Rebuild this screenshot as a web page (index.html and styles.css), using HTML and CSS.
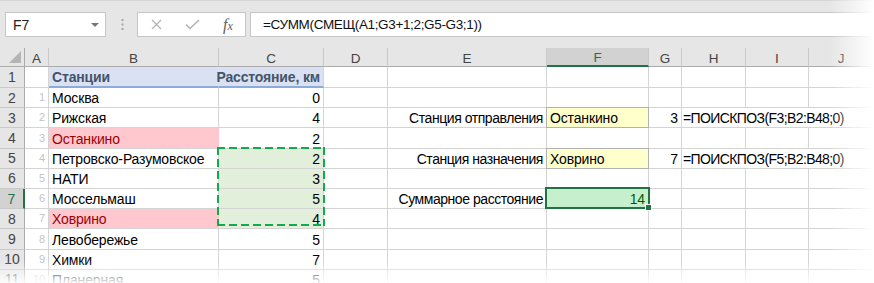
FILE: index.html
```html
<!DOCTYPE html>
<html lang="ru">
<head>
    <meta charset="UTF-8">
    <meta name="viewport" content="width=device-width, initial-scale=1.0">
    <title>СУММ и СМЕЩ</title>
    <link rel="stylesheet" href="styles.css">
</head>
<body>
    <div class="window">
        <div class="toolbar">
            <div class="namebox">
                <span>F7</span>
                <svg class="arrow" width="8" height="4" viewBox="0 0 8 4"><path d="M0 0H8L4 4Z" fill="#777"/></svg>
            </div>
            <svg class="dots" width="3" height="11" viewBox="0 0 3 11">
                <rect x="0.5" y="0" width="2" height="2" fill="#a6a6a6"/>
                <rect x="0.5" y="4.5" width="2" height="2" fill="#a6a6a6"/>
                <rect x="0.5" y="9" width="2" height="2" fill="#a6a6a6"/>
            </svg>
            <div class="fbuttons">
                <svg class="cancel" width="11" height="11" viewBox="0 0 11 11"><path d="M1 1L10 10M10 1L1 10" stroke="#b3b3b3" stroke-width="1.3" fill="none"/></svg>
                <svg class="enter" width="15" height="11" viewBox="0 0 15 11"><path d="M1 5.5L5 9.5L14 1" stroke="#b3b3b3" stroke-width="1.6" fill="none"/></svg>
                <span class="fx">f<small>x</small></span>
            </div>
            <div class="formula">=СУММ(СМЕЩ(A1;G3+1;2;G5-G3;1))</div>
        </div>

        <div class="sheet">
            <div class="corner"><svg width="12" height="12" viewBox="0 0 12 12"><path d="M12 0V12H0Z" fill="#b5b5b5"/></svg></div>
            <div class="ch">A</div>
            <div class="ch">B</div>
            <div class="ch">C</div>
            <div class="ch">D</div>
            <div class="ch">E</div>
            <div class="ch ch-sel">F</div>
            <div class="ch">G</div>
            <div class="ch">H</div>
            <div class="ch">I</div>
            <div class="ch">J</div>

            <!-- 1 -->
            <div class="rh">1</div>
            <div class="c"></div>
            <div class="c head">Станции</div>
            <div class="c head r">Расстояние, км</div>
            <div class="c"></div><div class="c"></div><div class="c"></div><div class="c"></div><div class="c"></div><div class="c"></div><div class="c"></div>

            <!-- 2 -->
            <div class="rh">2</div>
            <div class="c idx">1</div>
            <div class="c">Москва</div>
            <div class="c r">0</div>
            <div class="c"></div><div class="c"></div><div class="c"></div><div class="c"></div><div class="c"></div><div class="c"></div><div class="c"></div>

            <!-- 3 -->
            <div class="rh">3</div>
            <div class="c idx">2</div>
            <div class="c">Рижская</div>
            <div class="c r">4</div>
            <div class="c"></div>
            <div class="c r label">Станция отправления</div>
            <div class="c note">Останкино</div>
            <div class="c r">3</div>
            <div class="c wide">=ПОИСКПОЗ(F3;B2:B48;0)</div>

            <!-- 4 -->
            <div class="rh">4</div>
            <div class="c idx">3</div>
            <div class="c bad">Останкино</div>
            <div class="c r">2</div>
            <div class="c"></div><div class="c"></div><div class="c"></div><div class="c"></div><div class="c"></div><div class="c"></div><div class="c"></div>

            <!-- 5 -->
            <div class="rh">5</div>
            <div class="c idx">4</div>
            <div class="c">Петровско-Разумовское</div>
            <div class="c r range"><span class="marquee"></span>2</div>
            <div class="c"></div>
            <div class="c r label">Станция назначения</div>
            <div class="c note">Ховрино</div>
            <div class="c r">7</div>
            <div class="c wide">=ПОИСКПОЗ(F5;B2:B48;0)</div>

            <!-- 6 -->
            <div class="rh">6</div>
            <div class="c idx">5</div>
            <div class="c">НАТИ</div>
            <div class="c r range">3</div>
            <div class="c"></div><div class="c"></div><div class="c"></div><div class="c"></div><div class="c"></div><div class="c"></div><div class="c"></div>

            <!-- 7 -->
            <div class="rh rh-sel">7</div>
            <div class="c idx">6</div>
            <div class="c">Моссельмаш</div>
            <div class="c r range">5</div>
            <div class="c"></div>
            <div class="c r label">Суммарное расстояние</div>
            <div class="c r good"><span class="selection"></span>14</div>
            <div class="c"></div><div class="c"></div><div class="c"></div><div class="c"></div>

            <!-- 8 -->
            <div class="rh">8</div>
            <div class="c idx">7</div>
            <div class="c bad">Ховрино</div>
            <div class="c r range">4</div>
            <div class="c"></div><div class="c"></div><div class="c"></div><div class="c"></div><div class="c"></div><div class="c"></div><div class="c"></div>

            <!-- 9 -->
            <div class="rh">9</div>
            <div class="c idx">8</div>
            <div class="c">Левобережье</div>
            <div class="c r">5</div>
            <div class="c"></div><div class="c"></div><div class="c"></div><div class="c"></div><div class="c"></div><div class="c"></div><div class="c"></div>

            <!-- 10 -->
            <div class="rh">10</div>
            <div class="c idx">9</div>
            <div class="c">Химки</div>
            <div class="c r">7</div>
            <div class="c"></div><div class="c"></div><div class="c"></div><div class="c"></div><div class="c"></div><div class="c"></div><div class="c"></div>

            <!-- 11 -->
            <div class="rh">11</div>
            <div class="c idx">10</div>
            <div class="c">Планерная</div>
            <div class="c r">5</div>
            <div class="c"></div><div class="c"></div><div class="c"></div><div class="c"></div><div class="c"></div><div class="c"></div><div class="c"></div>
        </div>

        <div class="fade-right"></div>
        <div class="fade-bottom"></div>
    </div>
</body>
</html>
```

FILE: styles.css
```css
body {
    margin: 0;
    background-color: #fff;
    font-family: 'Liberation Sans', Arial, sans-serif;
}

.window {
    position: relative;
    width: 874px;
    height: 283px;
    overflow: hidden;
}

/* formula bar */
.toolbar {
    height: 48px;
    background-color: #e6e6e6;
    border-top: 1px solid #d6d6d6;
    box-sizing: border-box;
    display: flex;
    align-items: center;
    padding-left: 5px;
}

.namebox,
.fbuttons,
.formula {
    height: 25px;
    background-color: #fff;
    border: 1px solid #c6c6c6;
    box-sizing: border-box;
    display: flex;
    align-items: center;
}

.namebox {
    width: 101px;
    justify-content: space-between;
    padding: 0 6px 0 7px;
    font-size: 14px;
    color: #222;
}

.dots {
    margin-left: 15px;
}

.fbuttons {
    width: 109px;
    margin-left: 13px;
    padding-left: 13px;
}

.enter {
    margin-left: 23px;
}

.fx {
    margin-left: 23px;
    font-family: 'Liberation Serif', serif;
    font-style: italic;
    font-size: 16px;
    color: #5e5e5e;
}

.fx small {
    font-size: 12px;
}

.formula {
    flex: 1;
    margin-left: 4px;
    padding-left: 12px;
    font-size: 13.5px;
    letter-spacing: -0.35px;
    color: #111;
    border-right: none;
}

/* sheet */
.sheet {
    display: grid;
    grid-template-columns: 25px 24px 170px 105px 64px 159px 102px 33px 64px 63px 65px;
    grid-template-rows: 19px 21px repeat(10, 20.2px);
    font-size: 14px;
}

.corner,
.ch,
.rh {
    background-color: #e6e6e6;
    color: #444;
    box-sizing: border-box;
    display: flex;
    align-items: center;
    justify-content: center;
}

.corner {
    border-right: 1px solid #ababab;
    border-bottom: 1px solid #ababab;
    align-items: flex-end;
    justify-content: flex-end;
    padding: 0 3px 3px 0;
}

.ch {
    font-size: 13.5px;
    padding-top: 2px;
    border-right: 1px solid #c9c9c9;
    border-bottom: 1px solid #ababab;
}

.ch-sel {
    background-color: #d2d2d2;
    color: #217346;
    border-bottom: 2px solid #217346;
}

.rh {
    border-right: 1px solid #ababab;
    border-bottom: 1px solid #c9c9c9;
}

.rh-sel {
    background-color: #d2d2d2;
    color: #217346;
    border-right: 2px solid #217346;
}

.c {
    position: relative;
    box-sizing: border-box;
    border-right: 1px solid #d4d4d4;
    border-bottom: 1px solid #d4d4d4;
    display: flex;
    align-items: flex-end;
    padding: 0 3px 1px 3px;
    line-height: 16px;
    letter-spacing: -0.15px;
    white-space: nowrap;
    color: #000;
}

.c.r {
    justify-content: flex-end;
}

.c.label {
    letter-spacing: -0.45px;
}

.c.idx {
    justify-content: flex-end;
    font-size: 11px;
    color: #c4c4c4;
    padding-bottom: 2px;
}

.c.head {
    background-color: #d9e1f2;
    color: #44546a;
    font-weight: bold;
    border-right-color: #d9e1f2;
    border-bottom: 2px solid #8eaadb;
}

.c.head.r {
    border-right-color: #d4d4d4;
}

.c.bad {
    background-color: #ffc7ce;
    color: #9c0006;
    border-right-color: #ffc7ce;
}

.c.range {
    background-color: #e2efda;
}

.c.note {
    background-color: #ffffcc;
    border: 1px solid #b2b2b2;
    margin-top: -1px;
    margin-left: -1px;
    padding-left: 3px;
}

.c.good {
    background-color: #c6efce;
    color: #006100;
}

.c.wide {
    grid-column: span 3;
    padding-left: 1px;
    letter-spacing: -0.6px;
}

/* copy marquee around C5:C8 */
.marquee {
    position: absolute;
    left: -2px;
    right: -2px;
    top: -2px;
    height: calc(400% + 3px);
    background:
        repeating-linear-gradient(90deg, #16a84c 0 8px, transparent 8px 12px) top left / 100% 2px no-repeat,
        repeating-linear-gradient(90deg, #16a84c 0 8px, transparent 8px 12px) bottom left / 100% 2px no-repeat,
        repeating-linear-gradient(180deg, #16a84c 0 8px, transparent 8px 12px) top left / 2px 100% no-repeat,
        repeating-linear-gradient(180deg, #16a84c 0 8px, transparent 8px 12px) top right / 2px 100% no-repeat;
    z-index: 2;
}

/* active cell F7 */
.selection {
    position: absolute;
    left: -2px;
    right: -2px;
    top: -2px;
    bottom: -1px;
    border: 2px solid #217346;
    z-index: 2;
}

.selection::after {
    content: "";
    position: absolute;
    right: -4px;
    bottom: -4px;
    width: 5px;
    height: 5px;
    background-color: #217346;
    border: 1px solid #fff;
}

.fade-right {
    position: absolute;
    top: 0;
    right: 0;
    width: 44px;
    height: 100%;
    background: linear-gradient(90deg, rgba(255, 255, 255, 0), #fff);
    z-index: 3;
}

.fade-bottom {
    position: absolute;
    left: 0;
    bottom: 0;
    width: 100%;
    height: 22px;
    background: linear-gradient(180deg, rgba(255, 255, 255, 0), rgba(255, 255, 255, 0.92));
    z-index: 3;
}
```
